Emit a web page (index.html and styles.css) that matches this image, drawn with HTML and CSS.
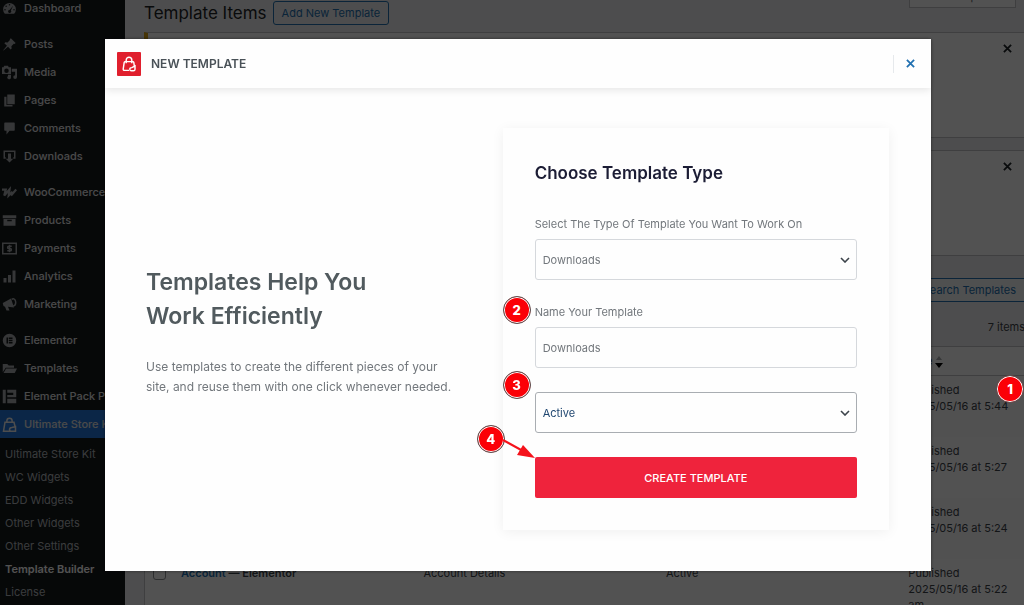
FILE: index.html
```html
<!DOCTYPE html>
<html lang="en">
<head>
    <meta charset="UTF-8">
    <meta name="viewport" content="width=device-width, initial-scale=1.0">
    <title>Template Items</title>
    <link rel="stylesheet" href="styles.css">
</head>
<body>
    <div class="page">
        <nav class="sidebar">
            <ul class="menu">
                <li><a href="#"><svg viewBox="0 0 20 20"><path fill-rule="evenodd" d="M3.8 17h12.4a8.5 8.5 0 1 0-12.4 0zM10 4a1 1 0 1 1 0 2 1 1 0 0 1 0-2zM5.500 6a1 1 0 1 1 0 2 1 1 0 0 1 0-2zM4 10.500a1 1 0 1 1 0 2 1 1 0 0 1 0-2zM16 10.500a1 1 0 1 1 0 2 1 1 0 0 1 0-2zM14.800 6.200l-3 6.500a2 2 0 1 1-1.700-.8z"/></svg>Dashboard</a></li>
                <li class="group"><a href="#"><svg viewBox="0 0 20 20"><path d="M10.400 3l1.400-1.400 6.400 6.400-1.400 1.400-1.100-.3-3.200 3.200.4 2.900-1.400 1.400-3.500-3.500L2 18l-.4-.4 5-5.900L3.100 8.300l1.400-1.400 2.900.4 3.200-3.200z"/></svg>Posts</a></li>
                <li><a href="#"><svg viewBox="0 0 20 20"><path fill-rule="evenodd" d="M0 3h2l1-2h5l1 2h3v9H0zM6 4.500a3 3 0 1 0 0 6 3 3 0 0 0 0-6z"/><path d="M13 5h7v11a2.500 2.500 0 1 1-2.500-2.500V9H13zM8 13h4v3.500a2.500 2.500 0 1 1-4-2z"/></svg>Media</a></li>
                <li><a href="#"><svg viewBox="0 0 20 20"><path d="M7 2h10v13H7z"/><path d="M3 5h3v11h8v2H3z"/></svg>Pages</a></li>
                <li><a href="#"><svg viewBox="0 0 20 20"><path d="M4 2h12a1 1 0 0 1 1 1v9a1 1 0 0 1-1 1H10l-4 5v-5H4a1 1 0 0 1-1-1V3a1 1 0 0 1 1-1z"/></svg>Comments</a></li>
                <li><a href="#"><svg viewBox="0 0 20 20"><path d="M2 2h16v11h-3v-2h1V4H4v7h1v2H2z"/><path d="M8 6h4v7h3l-5 5-5-5h3z"/></svg>Downloads</a></li>
                <li class="group"><a href="#"><svg viewBox="0 0 20 20"><path class="thick" d="M0 6h5l-2 8 7-8-1 8 5-5M12 14l7-8"/></svg>WooCommerce</a></li>
                <li><a href="#"><svg viewBox="0 0 20 20"><path d="M1 3h18v4H1z"/><path fill-rule="evenodd" d="M2 8h16v9H2zM7 9v2h6V9z"/></svg>Products</a></li>
                <li><a href="#"><svg viewBox="0 0 20 20"><path class="line" d="M1 3h18v14H1z"/><path class="line" d="M13 7H9a1.500 1.500 0 0 0 0 3h2a1.500 1.500 0 0 1 0 3H7M10 5v10"/></svg>Payments</a></li>
                <li><a href="#"><svg viewBox="0 0 20 20"><path d="M2 12h4v6H2zM8 8h4v10H8zM14 2h4v16h-4z"/></svg>Analytics</a></li>
                <li><a href="#"><svg viewBox="0 0 20 20"><path d="M1 8l11-6 4 12-8-1 2 5H6l-2-5-2-1z"/><path class="line" d="M13 3c6-3 7 8 2 9"/></svg>Marketing</a></li>
                <li class="group"><a href="#"><svg viewBox="0 0 20 20"><path fill-rule="evenodd" d="M10 1a9 9 0 1 0 0 18 9 9 0 0 0 0-18zM6 6h2v8H6zM9 6h5v2H9zM9 9h5v2H9zM9 12h5v2H9z"/></svg>Elementor</a></li>
                <li><a href="#"><svg viewBox="0 0 20 20"><path d="M1 4h6l2 2h7v3H5l-4 6z"/><path d="M5.500 10H20l-3 6H2z"/></svg>Templates</a></li>
                <li><a href="#"><svg viewBox="0 0 20 20"><path d="M1 1h4v18H1zM7 1h12v10H7V8h8V5H7zM7 13h12v6H7z"/></svg>Element Pack Pro</a></li>
                <li class="current"><a href="#"><svg viewBox="0 0 20 20"><path class="line" d="M13 19H2L4 7h12l2 8M6.500 7V5a3.500 3.500 0 0 1 7 0v2M10 17q0-3 3-3l5-1v6h-6q-2 0-2-2z"/></svg>Ultimate Store Kit</a></li>
            </ul>
            <ul class="submenu">
                <li><a href="#">Ultimate Store Kit</a></li>
                <li><a href="#">WC Widgets</a></li>
                <li><a href="#">EDD Widgets</a></li>
                <li><a href="#">Other Widgets</a></li>
                <li><a href="#">Other Settings</a></li>
                <li><a href="#" class="selected">Template Builder</a></li>
                <li><a href="#">License</a></li>
            </ul>
        </nav>

        <main class="content">
            <button type="button" class="screen-options">Screen Options</button>
            <div class="title-row">
                <h1>Template Items</h1>
                <a href="#" class="add-new">Add New Template</a>
            </div>

            <div class="notice warning">
                <button type="button" aria-label="Dismiss"><svg viewBox="0 0 10 10"><path d="M1 1l8 8M9 1L1 9"/></svg></button>
            </div>
            <div class="notice">
                <button type="button" aria-label="Dismiss"><svg viewBox="0 0 10 10"><path d="M1 1l8 8M9 1L1 9"/></svg></button>
            </div>

            <div class="search-row">
                <button type="button">Search Templates</button>
            </div>
            <div class="count-row">7 items</div>

            <table class="items">
                <thead>
                    <tr>
                        <th class="check"></th>
                        <th></th>
                        <th></th>
                        <th></th>
                        <th class="date">Date <svg viewBox="0 0 8 14"><path class="up" d="M1 5l3-4 3 4z"/><path d="M0 8h8l-4 5z"/></svg></th>
                    </tr>
                </thead>
                <tbody>
                    <tr>
                        <td></td>
                        <td></td>
                        <td></td>
                        <td></td>
                        <td>Published<br>2025/05/16 at 5:44</td>
                    </tr>
                    <tr>
                        <td></td>
                        <td></td>
                        <td></td>
                        <td></td>
                        <td>Published<br>2025/05/16 at 5:27</td>
                    </tr>
                    <tr>
                        <td></td>
                        <td></td>
                        <td></td>
                        <td></td>
                        <td>Published<br>2025/05/16 at 5:24</td>
                    </tr>
                    <tr>
                        <td><input type="checkbox" aria-label="Select Account"></td>
                        <td><a href="#">Account</a> — Elementor</td>
                        <td>Account Details</td>
                        <td>Active</td>
                        <td>Published<br>2025/05/16 at 5:22<br>am</td>
                    </tr>
                </tbody>
            </table>
        </main>
    </div>

    <div class="overlay">
        <div class="modal" role="dialog" aria-labelledby="modal-title">
            <header class="modal-header">
                <span class="logo">
                    <svg viewBox="0 0 20 20"><path d="M10 18H4.500q-2 0-1.700-2L4 8q.2-1 1.200-1h9.600q1 0 1.200 1l.6 4M6.500 9V5a3.500 3.500 0 0 1 7 0v4M11 16.500q0-2 2.500-2l4-2v4q0 2-2 2h-2.500q-2 0-2-2z"/></svg>
                </span>
                <h2 id="modal-title">NEW TEMPLATE</h2>
                <button type="button" class="close" aria-label="Close"><svg viewBox="0 0 10 10"><path d="M1 1l8 8M9 1L1 9"/></svg></button>
            </header>

            <div class="modal-body">
                <section class="intro">
                    <h3>Templates Help You<br>Work Efficiently</h3>
                    <p>Use templates to create the different pieces of your site, and reuse them with one click whenever needed.</p>
                </section>

                <form class="card">
                    <h4>Choose Template Type</h4>
                    <label for="type">Select The Type Of Template You Want To Work On</label>
                    <div class="select">
                        <select id="type"><option>Downloads</option></select>
                        <svg viewBox="0 0 10 6"><path d="M1 1l4 4 4-4"/></svg>
                    </div>
                    <label for="name">Name Your Template</label>
                    <input type="text" id="name" value="Downloads">
                    <div class="select status">
                        <select aria-label="Status"><option>Active</option></select>
                        <svg viewBox="0 0 10 6"><path d="M1 1l4 4 4-4"/></svg>
                    </div>
                    <button type="button" class="create">CREATE TEMPLATE</button>

                    <span class="marker marker-2">2</span>
                    <span class="marker marker-3">3</span>
                    <span class="marker marker-4">4</span>
                    <svg class="arrow" viewBox="0 0 32 20"><path class="shaft" d="M0 1l20 11"/><path d="M32 19L14 16l6-10z"/></svg>
                </form>
            </div>
        </div>
    </div>
    <span class="marker marker-1">1</span>
</body>
</html>
```
FILE: styles.css
```css
* {
    box-sizing: border-box;
}
body {
    margin: 0;
    font-family: Inter, "Liberation Sans", sans-serif;
    font-size: 11px;
    color: #3c434a;
    background: #f0f0f1;
}
h1, h2, h3, h4, p, ul {
    margin: 0;
    padding: 0;
}
ul {
    list-style: none;
}
a {
    text-decoration: none;
}
button, input, select {
    font-family: inherit;
}
.page {
    display: flex;
    height: 100vh;
    overflow: hidden;
}

/* Admin menu */
.sidebar {
    flex: 0 0 125px;
    background: #14191b;
}
.menu {
    margin-top: -6px;
}
.menu a {
    display: flex;
    align-items: center;
    gap: 7px;
    height: 28px;
    padding-left: 2px;
    font-size: 11px;
    font-weight: 500;
    color: #e4e5e6;
    white-space: nowrap;
    overflow: hidden;
}
.menu svg {
    flex: none;
    width: 15px;
    height: 15px;
    fill: #a7aaad;
}
.menu svg .line {
    fill: none;
    stroke: #a7aaad;
    stroke-width: 2;
}
.menu svg .thick {
    fill: none;
    stroke: #a7aaad;
    stroke-width: 3;
}
.menu .group {
    margin-top: 8px;
}
.menu .current a {
    background: #2478dc;
}
.menu .current svg .line {
    stroke: #f0f0f1;
}
.submenu {
    padding: 5px 0;
}
.submenu a {
    display: block;
    padding-left: 5px;
    line-height: 23px;
    color: #b4b9be;
}
.submenu .selected {
    color: #fff;
    font-weight: 600;
}

/* List screen */
.content {
    position: relative;
    flex: 1;
    min-width: 0;
    margin-right: -20px;
    padding-left: 19px;
}
.title-row {
    display: flex;
    align-items: center;
    gap: 6px;
    height: 26px;
}
.title-row h1 {
    font-size: 17px;
    font-weight: 400;
    color: #1d2327;
}
.add-new {
    padding: 0 8px;
    border: 1px solid #2271b1;
    border-radius: 3px;
    line-height: 22px;
    color: #2271b1;
}
.screen-options {
    position: absolute;
    top: -16px;
    right: 28px;
    width: 107px;
    height: 24px;
    border: 1px solid #c3c4c7;
    background: #fff;
    font-size: 11px;
    color: #646970;
}
.notice {
    display: flex;
    justify-content: flex-end;
    height: 106px;
    margin-bottom: 12px;
    padding: 10px 29px 0 0;
    border: 1px solid #c3c4c7;
    background: #fff;
}
.notice.warning {
    margin-top: 6px;
    border-left: 4px solid #dba617;
}
.notice button {
    width: 11px;
    height: 11px;
    padding: 0;
    border: 0;
    background: none;
}
.notice svg, .close svg {
    display: block;
    width: 9px;
    height: 9px;
    fill: none;
    stroke: #1d2327;
    stroke-width: 2;
}
.search-row {
    display: flex;
    justify-content: flex-end;
    margin: 22px 0 12px;
}
.search-row button {
    height: 24px;
    padding: 0 10px;
    margin-right: 17px;
    border: 1px solid #2271b1;
    border-radius: 3px;
    background: #f6f7f7;
    font-size: 11px;
    color: #2271b1;
}
.count-row {
    height: 32px;
    padding-right: 19px;
    line-height: 26px;
    text-align: right;
}
.items {
    width: 100%;
    table-layout: fixed;
    border: 1px solid #c3c4c7;
    border-spacing: 0;
    background: #fff;
    line-height: 16px;
}
.items th {
    width: 27%;
    height: 29px;
    padding: 0;
    border-bottom: 1px solid #c3c4c7;
    font-weight: 400;
    text-align: left;
}
.items .check {
    width: 36px;
}
.items .date {
    width: auto;
}
.items th svg {
    width: 8px;
    height: 14px;
    vertical-align: middle;
}
.items th .up {
    fill: #a7aaad;
}
.items td {
    height: 61px;
    padding: 6px 0 7px;
    vertical-align: top;
}
.items tbody tr:nth-child(odd) {
    background: #fafafa;
}
.items td a {
    color: #2271b1;
}
.items td:nth-child(2) {
    font-weight: 600;
}
.items input {
    appearance: none;
    width: 13px;
    height: 13px;
    margin: 2px 8px;
    border: 1px solid #8c8f94;
    border-radius: 3px;
    background: #fff;
}

/* Modal */
.overlay {
    position: fixed;
    inset: 0;
    display: flex;
    align-items: flex-start;
    padding: 39px 93px 34px 105px;
    background: rgba(0, 0, 0, 0.68);
}
.modal {
    flex: 1;
    background: #fefefe;
    box-shadow: 0 0 3px rgba(0, 0, 0, 0.5);
}
.modal-header {
    display: flex;
    align-items: center;
    gap: 10px;
    height: 49px;
    padding: 0 16px 0 12px;
    box-shadow: 0 2px 8px rgba(0, 0, 0, 0.1);
}
.logo {
    width: 24px;
    height: 24px;
    padding: 4px;
    border-radius: 1px;
    background: #e01f2d;
}
.logo svg {
    display: block;
    width: 16px;
    height: 16px;
    fill: none;
    stroke: #fff;
    stroke-width: 1.8;
}
.modal-header h2 {
    font-size: 12px;
    font-weight: 600;
    color: #495157;
}
.close {
    display: flex;
    align-items: center;
    justify-content: flex-end;
    width: 22px;
    height: 18px;
    margin-left: auto;
    padding: 0;
    border: 0;
    border-left: 1px solid #e6e9ec;
    background: none;
}
.close svg {
    stroke: #2271b1;
}
.modal-body {
    display: flex;
    align-items: center;
    padding: 40px 42px 41px 41px;
}
.intro {
    flex: 1;
    padding: 4px 44px 0 0;
}
.intro h3 {
    margin-bottom: 24px;
    font-size: 23px;
    font-weight: 600;
    line-height: 34px;
    color: #515a5e;
}
.intro p {
    font-size: 12px;
    line-height: 20px;
    color: #72777c;
}
.card {
    position: relative;
    display: flex;
    flex-direction: column;
    width: 52%;
    padding: 32px;
    box-shadow: 0 2px 12px rgba(0, 0, 0, 0.06);
}
.card h4 {
    margin-bottom: 30px;
    font-size: 17px;
    font-weight: 600;
    line-height: 26px;
    color: #1c1d35;
}
.card label {
    margin-bottom: 7px;
    font-size: 11px;
    line-height: 16px;
    color: #72777c;
}
.select {
    position: relative;
}
.card select, .card input {
    appearance: none;
    display: block;
    width: 100%;
    height: 41px;
    margin-bottom: 24px;
    padding: 0 7px;
    border: 1px solid #d5d8dc;
    border-radius: 3px;
    background: #fefefe;
    font-size: 11px;
    color: #72777c;
}
.select svg {
    position: absolute;
    top: 18px;
    right: 7px;
    width: 10px;
    height: 6px;
    fill: none;
    stroke: #3c434a;
    stroke-width: 1.6;
}
.card .status select {
    border-color: #a9adb2;
    color: #1f4670;
}
.create {
    height: 41px;
    border: 0;
    border-radius: 2px;
    background: #ef233c;
    font-size: 11px;
    font-weight: 500;
    color: #fff;
}

/* Step markers */
.marker {
    position: absolute;
    width: 28px;
    height: 28px;
    border: 1px solid #555;
    border-radius: 50%;
    background: #fb0007;
    box-shadow: inset 0 0 0 1px #fff;
    font-size: 13px;
    font-weight: 800;
    line-height: 26px;
    text-align: center;
    color: #fff;
}
.marker-1 {
    position: fixed;
    top: 375px;
    right: 0;
}
.marker-2 {
    top: 168px;
    left: 0;
}
.marker-3 {
    top: 243px;
    left: 0;
}
.marker-4 {
    top: 297px;
    left: -26px;
}
.arrow {
    position: absolute;
    top: 311px;
    left: 0;
    width: 32px;
    height: 20px;
    fill: #f5121b;
}
.arrow .shaft {
    stroke: #f5121b;
    stroke-width: 2;
}
```
